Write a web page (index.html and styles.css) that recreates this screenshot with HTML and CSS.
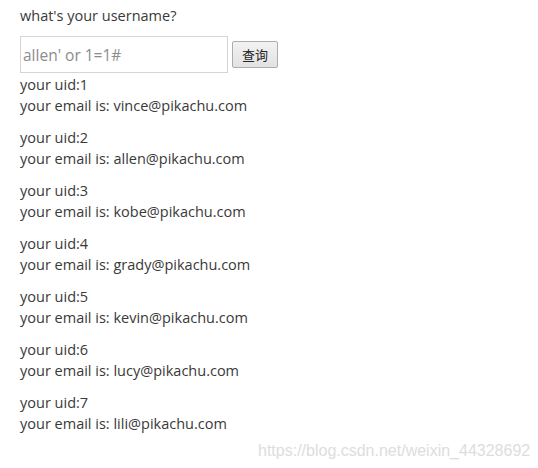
FILE: index.html
```html
<!DOCTYPE html>
<html lang="en">
<head>
    <meta charset="UTF-8">
    <title>sqli</title>
    <link rel="stylesheet" href="styles.css">
</head>
<body>
    <div class="main">
        <p class="title">what's your username?</p>
        <form class="query-form">
            <input type="text" class="name-input" placeholder="allen' or 1=1#">
            <button type="button" class="submit-btn">查询</button>
        </form>
        <div class="results">
            <p class="row">your uid:1<br>your email is: vince@pikachu.com</p>
            <p class="row">your uid:2<br>your email is: allen@pikachu.com</p>
            <p class="row">your uid:3<br>your email is: kobe@pikachu.com</p>
            <p class="row">your uid:4<br>your email is: grady@pikachu.com</p>
            <p class="row">your uid:5<br>your email is: kevin@pikachu.com</p>
            <p class="row">your uid:6<br>your email is: lucy@pikachu.com</p>
            <p class="row">your uid:7<br>your email is: lili@pikachu.com</p>
        </div>
    </div>
    <div class="watermark">https://blog.csdn.net/weixin_44328692</div>
</body>
</html>
```

FILE: styles.css
```css
body {
    margin: 0;
    background-color: #ffffff;
    font-family: 'Open Sans', 'Noto Sans CJK SC', sans-serif;
    font-size: 14.5px;
    line-height: 21px;
    color: #393939;
}

.main {
    padding: 5px 20px 0;
}

.title {
    margin: 0 0 10px;
}

.query-form {
    display: flex;
    align-items: center;
    gap: 4px;
}

.name-input {
    width: 208px;
    height: 37px;
    box-sizing: border-box;
    padding: 0 2px;
    border: 1px solid #d5d5d5;
    font-family: inherit;
    font-size: 15.5px;
    color: #393939;
}

.name-input::placeholder {
    color: #8c8c8c;
}

.submit-btn {
    width: 46px;
    height: 27px;
    padding: 0;
    border: 1px solid #adadad;
    border-radius: 2px;
    background: linear-gradient(#f2f2f2, #e2e2e2);
    font-family: 'Noto Sans CJK SC', sans-serif;
    font-size: 13px;
    color: #222;
}

.results {
    margin-top: 1px;
}

.row {
    margin: 0 0 11px;
}

.watermark {
    position: absolute;
    left: 258px;
    top: 440px;
    font-family: 'Liberation Sans', sans-serif;
    font-size: 16px;
    color: #dddddd;
}
```
